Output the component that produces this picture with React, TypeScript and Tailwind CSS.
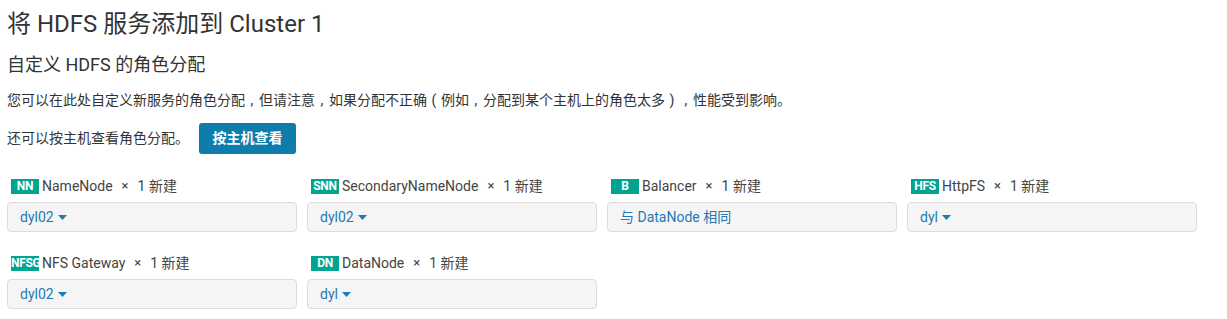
import React from "react";

const font = { fontFamily: "Roboto, 'Noto Sans CJK SC', sans-serif" };

type Role = { badge: string; name: string; value: string; caret: boolean };

const rows: Role[][] = [
  [
    { badge: "NN", name: "NameNode", value: "dyl02", caret: true },
    { badge: "SNN", name: "SecondaryNameNode", value: "dyl02", caret: true },
    { badge: "B", name: "Balancer", value: "与 DataNode 相同", caret: false },
    { badge: "HFS", name: "HttpFS", value: "dyl", caret: true },
  ],
  [
    { badge: "NFSG", name: "NFS Gateway", value: "dyl02", caret: true },
    { badge: "DN", name: "DataNode", value: "dyl", caret: true },
  ],
];

function Caret() {
  return (
    <svg width="9" height="5" viewBox="0 0 9 5" className="ml-[4px] mt-[1px]">
      <path d="M0 0 L9 0 L4.5 5 Z" fill="#1f7ab5" />
    </svg>
  );
}

function P({ c }: { c: string }) {
  return <span className="inline-block w-[14px] text-center">{c}</span>;
}

function RoleCard({ r }: { r: Role }) {
  return (
    <div className="w-[300px] pr-[10px]">
      <div className="flex items-center h-[18px] pl-[4px] text-[14px] text-[#444]">
        <span className="block w-[28px] h-[15px] overflow-hidden whitespace-nowrap text-center bg-[#00a591] text-white font-bold text-[12px] leading-[15px] tracking-[-0.3px]">
          {r.badge}
        </span>
        <span className="ml-[3px]">{r.name}</span>
        <span className="mx-[9px] text-[13px]">×</span>
        <span>1 新建</span>
      </div>
      <div className="mt-[7px] h-[30px] flex items-center border border-[#dcdcdc] rounded-[4px] bg-[#f5f5f5] text-[14px] text-[#1f7ab5] pl-[12px]">
        <span>{r.value}</span>
        {r.caret && <Caret />}
      </div>
    </div>
  );
}

export default function App() {
  return (
    <div className="w-[1227px] h-[319px] bg-white pl-[7px] overflow-hidden" style={font}>
      <h1 className="pt-[9px] text-[24px] leading-[30px] text-[#333]">将 HDFS 服务添加到 Cluster 1</h1>
      <h2 className="mt-[14px] text-[18px] leading-[24px] text-[#333]">自定义 HDFS 的角色分配</h2>
      <p className="mt-[13px] text-[14px] leading-[20px] text-[#333]">
        您可以在此处自定义新服务的角色分配<P c="," />但请注意<P c="," />如果分配不正确<P c="(" />例如<P c="," />分配到某个主机上的角色太多<P c=")" /><P c="," />性能受到影响。
      </p>
      <div className="mt-[13px] flex items-center text-[14px] text-[#333]">
        <span>还可以按主机查看角色分配。</span>
        <button className="ml-[10px] w-[97px] h-[31px] rounded-[3px] bg-[#0f7dab] text-white font-bold text-[14px]">
          按主机查看
        </button>
      </div>
      <div className="mt-[23px] flex flex-col gap-[22px]">
        {rows.map((row, i) => (
          <div key={i} className="flex">
            {row.map((r) => (
              <RoleCard key={r.badge} r={r} />
            ))}
          </div>
        ))}
      </div>
    </div>
  );
}
